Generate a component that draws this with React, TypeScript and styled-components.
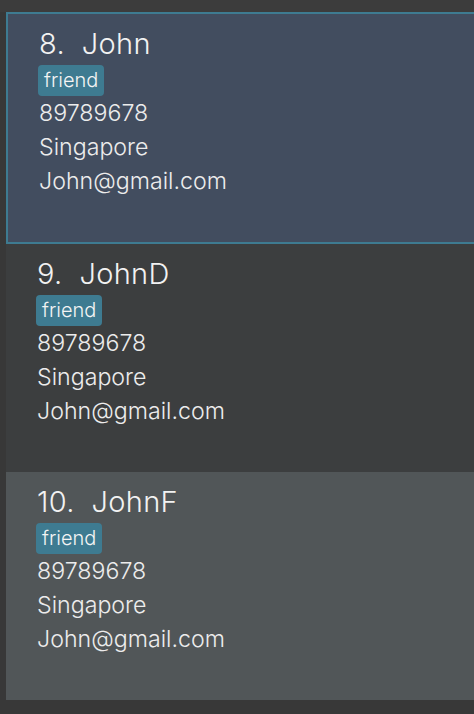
import React from "react";
import styled, { createGlobalStyle } from "styled-components";

const Global = createGlobalStyle`
  html, body { margin: 0; padding: 0; background: #383838; overflow: hidden; }
  body { font-family: Inter, "Open Sans", "Liberation Sans", sans-serif; }
`;

const Page = styled.div`
  width: 474px;
  height: 714px;
  overflow: hidden;
  background: #383838;
  display: flex;
  flex-direction: column;
`;

const TopStrip = styled.div`
  height: 12px;
  background: #3c3c3c;
  flex: none;
`;

const List = styled.div`
  margin-left: 6px;
  width: 520px;
  display: flex;
  flex-direction: column;
`;

type Variant = "selected" | "dark" | "light";

const bg: Record<Variant, string> = {
  selected: "#424d5f",
  dark: "#3c3e3f",
  light: "#515658",
};

const Cell = styled.div<{ $variant: Variant }>`
  box-sizing: border-box;
  background: ${(p) => bg[p.$variant]};
  border: ${(p) => (p.$variant === "selected" ? "2px solid #3e7b91" : "none")};
  height: ${(p) => (p.$variant === "selected" ? "232px" : "228px")};
  padding: 11px 0 0 31px;
  display: flex;
  flex-direction: column;
  align-items: flex-start;
  color: #ececec;
  font-weight: 300;
`;

const Name = styled.div`
  font-size: 29px;
  line-height: 38px;
  color: #f2f2f2;
  white-space: pre;
  letter-spacing: 0.3px;
`;

const Tag = styled.span`
  background: #3e7b91;
  color: #f4f4f4;
  font-size: 20px;
  line-height: 31px;
  padding: 0 6px;
  border-radius: 4px;
  margin: 2px 0 0 -1px;
`;

const Line = styled.div`
  font-size: 23.2px;
  line-height: 34px;
`;

const people = [
  { idx: 8, name: "John", variant: "selected" as Variant },
  { idx: 9, name: "JohnD", variant: "dark" as Variant },
  { idx: 10, name: "JohnF", variant: "light" as Variant },
];

export default function App() {
  return (
    <Page>
      <Global />
      <TopStrip />
      <List>
        {people.map((p) => (
          <Cell key={p.idx} $variant={p.variant}>
            <Name>{`${p.idx}.  ${p.name}`}</Name>
            <Tag>friend</Tag>
            <Line>89789678</Line>
            <Line>Singapore</Line>
            <Line>John@gmail.com</Line>
          </Cell>
        ))}
      </List>
    </Page>
  );
}
